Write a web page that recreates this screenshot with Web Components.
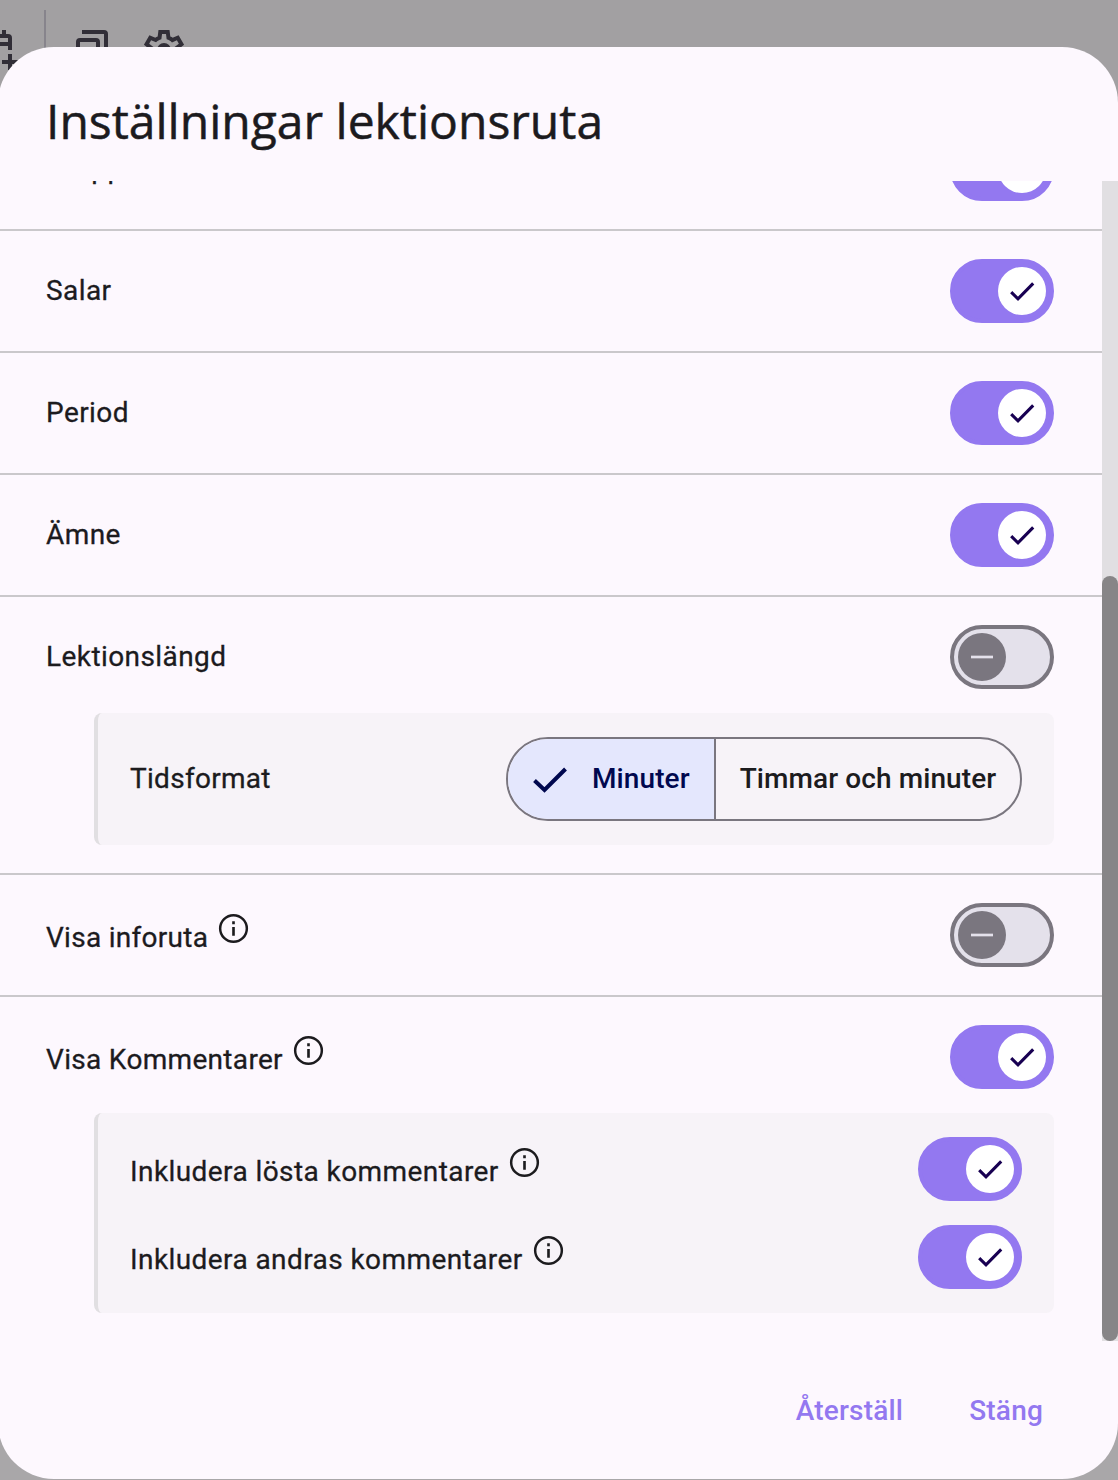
<!DOCTYPE html>
<html lang="sv">
<head>
<meta charset="utf-8">
<title>Inställningar lektionsruta</title>
<style>
  html, body {
    margin: 0;
    height: 100%;
  }
  body {
    font-family: Roboto, "Liberation Sans", sans-serif;
    color: #1c1b1e;
    overflow: hidden;
  }
  .tight {
    --tracking: 0.28px;
  }
</style>
</head>
<body>
<app-shell>
  <tool-bar slot="toolbar"></tool-bar>
  <settings-dialog heading="Inställningar lektionsruta">
    <setting-row label="Grupper" on></setting-row>
    <setting-row label="Salar" on></setting-row>
    <setting-row label="Period" on></setting-row>
    <setting-row label="Ämne" on></setting-row>
    <setting-row label="Lektionslängd">
      <sub-panel slot="sub">
        <sub-row class="tight" label="Tidsformat">
          <segmented-button>
            <segment-option selected>Minuter</segment-option>
            <segment-option>Timmar och minuter</segment-option>
          </segmented-button>
        </sub-row>
      </sub-panel>
    </setting-row>
    <setting-row class="tight" label="Visa inforuta" info></setting-row>
    <setting-row label="Visa Kommentarer" info on last style="--tracking: 0.32px">
      <sub-panel slot="sub" style="--tracking: 0.42px">
        <sub-row label="Inkludera lösta kommentarer" info><toggle-switch on></toggle-switch></sub-row>
        <sub-row label="Inkludera andras kommentarer" info><toggle-switch on></toggle-switch></sub-row>
      </sub-panel>
    </setting-row>
    <text-button slot="actions">Återställ</text-button>
    <text-button slot="actions">Stäng</text-button>
  </settings-dialog>
</app-shell>

<script>
class BaseElement extends HTMLElement {
  constructor() {
    super();
    this.shadow = this.attachShadow({ mode: "open" });
  }

  connectedCallback() {
    this.render();
  }
}

class AppShell extends BaseElement {
  render() {
    this.shadow.innerHTML = `
      <style>
      :host {
        display: grid;
        grid-template: 100vh / 1118px;
        background: linear-gradient(#a2a0a2 0, #a2a0a2 140px, #a9a7a9 140px);
        overflow: hidden;
      }
      slot {
        display: block;
        grid-area: 1 / 1;
      }
      </style>
      <slot name="toolbar"></slot>
      <slot></slot>
    `;
  }
}

class ToolBar extends BaseElement {
  render() {
    this.shadow.innerHTML = `
      <style>
      :host {
        display: flex;
        align-items: flex-start;
        height: 90px;
        padding-top: 10px;
        box-sizing: border-box;
      }
      svg {
        width: 48px;
        height: 48px;
        margin-top: 16px;
        fill: #312e37;
        flex: none;
      }
      .calendar {
        margin-left: -28px;
      }
      .divider {
        width: 2px;
        height: 80px;
        margin: 0 26px 0 24px;
        background: #87848c;
      }
      .settings {
        margin-left: 20px;
      }
      </style>
      <svg class="calendar" viewBox="0 0 48 48"><path d="M8 8h2V4h4v4h16V4h4v4h2a4 4 0 0 1 4 4v12h-4v-4H8v20h16v4H8a4 4 0 0 1-4-4V12a4 4 0 0 1 4-4Zm0 4v4h28v-4ZM36 28h4v6h6v4h-6v6h-4v-6h-6v-4h6Z"/></svg>
      <div class="divider"></div>
      <svg viewBox="0 0 48 48"><path d="M10 4h22a4 4 0 0 1 4 4v24h-4V8H10Zm-2 8h16a4 4 0 0 1 4 4v24a4 4 0 0 1-4 4H8a4 4 0 0 1-4-4V16a4 4 0 0 1 4-4Zm0 4v24h16V16Z"/></svg>
      <svg class="settings" viewBox="0 -960 960 960"><path d="m370-80-16-128q-13-5-24.500-12T307-235l-119 50L78-375l103-78q-1-7-1-13.500v-27q0-6.500 1-13.500L78-585l110-190 119 50q11-8 23-15t24-12l16-128h220l16 128q13 5 24.500 12t22.500 15l119-50 110 190-103 78q1 7 1 13.500v27q0 6.500-2 13.500l103 78-110 190-118-50q-11 8-23 15t-24 12L590-80H370Zm70-80h79l14-106q31-8 57.500-23.500T639-327l99 41 39-68-86-65q5-14 7-29.500t2-31.500q0-16-2-31.500t-7-29.500l86-65-39-68-99 42q-22-23-48.500-38.500T533-694l-13-106h-79l-14 106q-31 8-57.500 23.500T321-633l-99-41-39 68 86 64q-5 15-7 30t-2 32q0 16 2 31t7 30l-86 65 39 68 99-42q22 23 48.500 38.500T427-266l13 106Z" fill-rule="evenodd"/><circle cx="480" cy="-480" r="140"/></svg>
    `;
  }
}

class SettingsDialog extends BaseElement {
  render() {
    this.shadow.innerHTML = `
      <style>
      :host {
        display: flex;
        flex-direction: column;
        width: 1120px;
        height: 1432px;
        margin: 47px 0 0 -2px;
        border-radius: 56px;
        background: #fdf8fe;
        overflow: hidden;
      }
      h1 {
        margin: 0;
        height: 134px;
        box-sizing: border-box;
        padding: 41px 48px 0;
        font: 400 48px/66px "Open Sans", sans-serif;
        -webkit-text-stroke: 0.5px currentColor;
      }
      .scroller {
        display: flex;
        height: 1160px;
        overflow: hidden;
      }
      .content {
        flex: 1;
        display: flex;
        flex-direction: column;
        justify-content: flex-end;
      }
      .track {
        display: flex;
        flex-direction: column;
        justify-content: flex-end;
        width: 16px;
        background: #e1dfe2;
      }
      .thumb {
        height: 765px;
        border-radius: 8px;
        background: #878587;
      }
      .actions {
        display: flex;
        flex: 1;
        justify-content: flex-end;
        align-items: center;
        gap: 18px;
        padding: 2px 51px 0 0;
      }
      </style>
      <h1>${this.getAttribute("heading")}</h1>
      <div class="scroller">
        <div class="content"><slot></slot></div>
        <div class="track"><div class="thumb"></div></div>
      </div>
      <div class="actions"><slot name="actions"></slot></div>
    `;
  }
}

class InfoLabel extends BaseElement {
  render() {
    const icon = `<svg viewBox="0 0 24 24"><path d="M11.100 7h1.800v2h-1.800zm0 4h1.800v6h-1.800zM12 2a10 10 0 1 0 0 20 10 10 0 0 0 0-20zm0 18.300a8.300 8.300 0 1 1 0-16.600 8.300 8.300 0 0 1 0 16.600z"/></svg>`;
    this.shadow.innerHTML = `
      <style>
      :host {
        display: flex;
        align-items: center;
        font-size: 28px;
        line-height: 40px;
        letter-spacing: var(--tracking, 0.42px);
        white-space: nowrap;
        -webkit-text-stroke: 0.3px currentColor;
      }
      :host([info]) span {
        padding-top: 5px;
      }
      svg {
        width: 35px;
        height: 35px;
        margin: 0 0 13px 8px;
        fill: #1c1b1e;
      }
      </style>
      <span>${this.getAttribute("text")}</span>${this.hasAttribute("info") ? icon : ""}
    `;
  }
}

class ToggleSwitch extends BaseElement {
  render() {
    const on = this.hasAttribute("on");
    this.shadow.innerHTML = `
      <style>
      :host {
        display: flex;
        align-items: center;
        flex: none;
        width: 104px;
        height: 64px;
        box-sizing: border-box;
        padding: 0 4px;
        border: 4px solid #7a767f;
        border-radius: 32px;
        background: #e4e1eb;
      }
      :host([on]) {
        justify-content: flex-end;
        border-color: #9378f0;
        background: #9378f0;
      }
      .handle {
        display: flex;
        align-items: center;
        justify-content: center;
        width: 48px;
        height: 48px;
        border-radius: 50%;
        background: #7a767f;
      }
      :host([on]) .handle {
        background: #fff;
      }
      svg {
        width: 32px;
        height: 32px;
        fill: none;
        stroke: #e4e1eb;
        stroke-width: 2.700px;
      }
      :host([on]) svg {
        stroke: #180052;
        stroke-width: 3.100px;
      }
      </style>
      <div class="handle">
        <svg viewBox="0 0 32 32"><path d="${on ? "M5.200 17.200 12 23.900 27.200 8.300" : "M5 16h22"}"/></svg>
      </div>
    `;
  }
}

class SettingRow extends BaseElement {
  render() {
    this.shadow.innerHTML = `
      <style>
      :host {
        display: flex;
        flex-direction: column;
        flex: none;
        gap: 24px;
        padding: 28px 48px;
        border-bottom: 2px solid #cac8cb;
      }
      :host([last]) {
        border-bottom: 0;
      }
      .line {
        display: flex;
        align-items: center;
        justify-content: space-between;
        height: 64px;
      }
      slot {
        display: contents;
      }
      </style>
      <div class="line">
        <info-label text="${this.getAttribute("label")}" ${this.hasAttribute("info") ? "info" : ""}></info-label>
        <toggle-switch ${this.hasAttribute("on") ? "on" : ""}></toggle-switch>
      </div>
      <slot name="sub"></slot>
    `;
  }
}

class SubPanel extends BaseElement {
  render() {
    this.shadow.innerHTML = `
      <style>
      :host {
        display: flex;
        flex-direction: column;
        gap: 24px;
        margin-left: 48px;
        padding: 24px 32px;
        border-left: 4px solid #e1dfe2;
        border-radius: 8px;
        background: #f7f3f8;
      }
      </style>
      <slot></slot>
    `;
  }
}

class SubRow extends BaseElement {
  render() {
    this.shadow.innerHTML = `
      <style>
      :host {
        display: flex;
        align-items: center;
        justify-content: space-between;
      }
      </style>
      <info-label text="${this.getAttribute("label")}" ${this.hasAttribute("info") ? "info" : ""}></info-label>
      <slot></slot>
    `;
  }
}

class SegmentedButton extends BaseElement {
  render() {
    this.shadow.innerHTML = `
      <style>
      :host {
        display: flex;
        width: 516px;
        height: 84px;
        box-sizing: border-box;
        border: 2px solid #7a767f;
        border-radius: 42px;
        overflow: hidden;
      }
      </style>
      <slot></slot>
    `;
  }
}

class SegmentOption extends BaseElement {
  render() {
    const check = `<svg viewBox="0 0 34 28"><path d="M1.500 15.500 11.500 25 32.500 4" fill="none" stroke="#00084f" stroke-width="4"/></svg>`;
    this.shadow.innerHTML = `
      <style>
      :host {
        display: flex;
        align-items: center;
        justify-content: center;
        flex: 1;
        box-sizing: border-box;
        padding-bottom: 2px;
        font-size: 28px;
        font-weight: 500;
        letter-spacing: 0.1px;
        white-space: nowrap;
      }
      :host([selected]) {
        flex: 0 0 208px;
        justify-content: flex-start;
        padding-left: 25px;
        border-right: 2px solid #7a767f;
        background: #e4e7fd;
        color: #00084f;
      }
      svg {
        width: 34px;
        height: 28px;
        margin: 2px 25px 0 0;
      }
      </style>
      ${this.hasAttribute("selected") ? check : ""}<slot></slot>
    `;
  }
}

class TextButton extends BaseElement {
  render() {
    this.shadow.innerHTML = `
      <style>
      :host {
        padding: 20px 24px;
        font-size: 28px;
        line-height: 40px;
        font-weight: 500;
        letter-spacing: 0.2px;
        color: #9378f0;
      }
      </style>
      <slot></slot>
    `;
  }
}

customElements.define("app-shell", AppShell);
customElements.define("tool-bar", ToolBar);
customElements.define("settings-dialog", SettingsDialog);
customElements.define("info-label", InfoLabel);
customElements.define("toggle-switch", ToggleSwitch);
customElements.define("setting-row", SettingRow);
customElements.define("sub-panel", SubPanel);
customElements.define("sub-row", SubRow);
customElements.define("segmented-button", SegmentedButton);
customElements.define("segment-option", SegmentOption);
customElements.define("text-button", TextButton);
</script>
</body>
</html>
